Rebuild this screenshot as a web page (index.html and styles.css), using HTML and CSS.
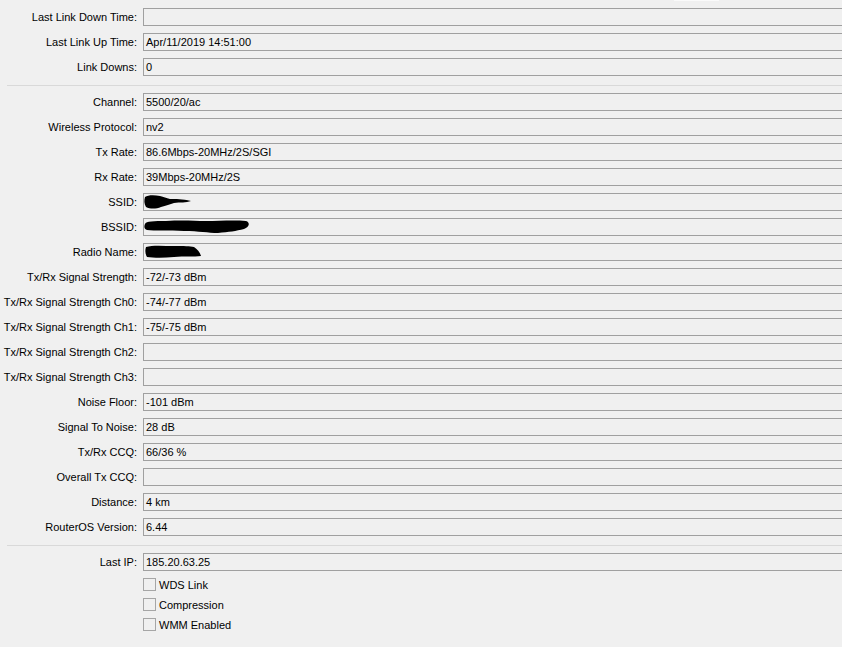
FILE: index.html
```html
<!DOCTYPE html>
<html>
<head>
<meta charset="utf-8">
<link rel="stylesheet" href="styles.css">
</head>
<body>
<div class="tab"></div>
<div class="form">
  <div class="row"><span class="label">Last Link Down Time:</span><div class="field"></div></div>
  <div class="row"><span class="label">Last Link Up Time:</span><div class="field">Apr/11/2019 14:51:00</div></div>
  <div class="row"><span class="label">Link Downs:</span><div class="field">0</div></div>
  <div class="sep"></div>
  <div class="row"><span class="label">Channel:</span><div class="field">5500/20/ac</div></div>
  <div class="row"><span class="label">Wireless Protocol:</span><div class="field">nv2</div></div>
  <div class="row"><span class="label">Tx Rate:</span><div class="field">86.6Mbps-20MHz/2S/SGI</div></div>
  <div class="row"><span class="label">Rx Rate:</span><div class="field">39Mbps-20MHz/2S</div></div>
  <div class="row"><span class="label">SSID:</span><div class="field"><svg class="redact" width="50" height="16" viewBox="0 0 50 16"><path d="M1 3 C4 1 10 1 16 2 C20 3 22 4 26 5 C32 5 38 5 47 7 C42 9 36 8 30 9 C26 10 22 12 17 13 C12 15 6 15 2 13 C0 10 0 6 1 3 Z" fill="#000"/></svg></div></div>
  <div class="row"><span class="label">BSSID:</span><div class="field"><svg class="redact" width="106" height="16" viewBox="0 0 106 16"><path d="M1 5 C2 2 10 2 22 2 C40 1 50 2 62 2 C75 2 90 1 102 2 C106 3 106 8 100 10 C92 12 85 13 74 14 C64 14 55 12 40 12 C25 11 10 12 3 11 C0 10 0 7 1 5 Z" fill="#000"/></svg></div></div>
  <div class="row"><span class="label">Radio Name:</span><div class="field"><svg class="redact" width="60" height="16" viewBox="0 0 60 16"><path d="M2 3 C8 1 20 2 30 2 C40 2 46 2 50 3 C53 5 56 8 57 12 C50 13 40 12 30 13 C20 14 10 14 3 13 C1 10 1 6 2 3 Z" fill="#000"/></svg></div></div>
  <div class="row"><span class="label">Tx/Rx Signal Strength:</span><div class="field">-72/-73 dBm</div></div>
  <div class="row"><span class="label">Tx/Rx Signal Strength Ch0:</span><div class="field">-74/-77 dBm</div></div>
  <div class="row"><span class="label">Tx/Rx Signal Strength Ch1:</span><div class="field">-75/-75 dBm</div></div>
  <div class="row"><span class="label">Tx/Rx Signal Strength Ch2:</span><div class="field"></div></div>
  <div class="row"><span class="label">Tx/Rx Signal Strength Ch3:</span><div class="field"></div></div>
  <div class="row"><span class="label">Noise Floor:</span><div class="field">-101 dBm</div></div>
  <div class="row"><span class="label">Signal To Noise:</span><div class="field">28 dB</div></div>
  <div class="row"><span class="label">Tx/Rx CCQ:</span><div class="field">66/36 %</div></div>
  <div class="row"><span class="label">Overall Tx CCQ:</span><div class="field"></div></div>
  <div class="row"><span class="label">Distance:</span><div class="field">4 km</div></div>
  <div class="row"><span class="label">RouterOS Version:</span><div class="field">6.44</div></div>
  <div class="sep"></div>
  <div class="row"><span class="label">Last IP:</span><div class="field">185.20.63.25</div></div>
  <div class="check-row"><span class="box"></span><span class="check-label">WDS Link</span></div>
  <div class="check-row"><span class="box"></span><span class="check-label">Compression</span></div>
  <div class="check-row"><span class="box"></span><span class="check-label">WMM Enabled</span></div>
</div>
</body>
</html>
```
FILE: styles.css
```css
html, body {
  margin: 0;
  padding: 0;
  background: #f0f0f0;
}
body {
  font-family: "Liberation Sans", Arial, sans-serif;
  font-size: 11px;
  color: #000;
  width: 842px;
  height: 647px;
  overflow: hidden;
  position: relative;
}
.tab {
  position: absolute;
  top: 0;
  left: 674px;
  width: 45px;
  height: 1px;
  background: #fafafa;
}
.form {
  display: flex;
  flex-direction: column;
  padding-top: 8px;
}
.row {
  display: grid;
  grid-template-columns: 137px 1fr;
  grid-template-rows: 18px;
  column-gap: 6px;
  height: 18px;
  margin-bottom: 7px;
}
.label {
  box-sizing: border-box;
  height: 18px;
  text-align: right;
  white-space: nowrap;
  line-height: 17px;
  padding-top: 1px;
}
.field {
  box-sizing: border-box;
  height: 18px;
  border: 1px solid #a0a0a0;
  border-right: none;
  padding-left: 2px;
  padding-top: 1px;
  line-height: 15px;
  white-space: nowrap;
  display: flex;
  align-items: center;
}
.redact {
  display: block;
  margin-left: -2px;
  margin-top: -1px;
}
.sep {
  height: 1px;
  background: #d9d9d9;
  margin: 2px 0 7px 7px;
}
.check-row {
  display: flex;
  align-items: center;
  height: 13px;
  margin-left: 143px;
  margin-bottom: 7px;
}
.box {
  box-sizing: border-box;
  width: 13px;
  height: 13px;
  border: 1px solid #a6a6a6;
  background: #f0f0f0;
}
.check-label {
  margin-left: 3px;
  line-height: 13px;
  padding-top: 1px;
}
```
